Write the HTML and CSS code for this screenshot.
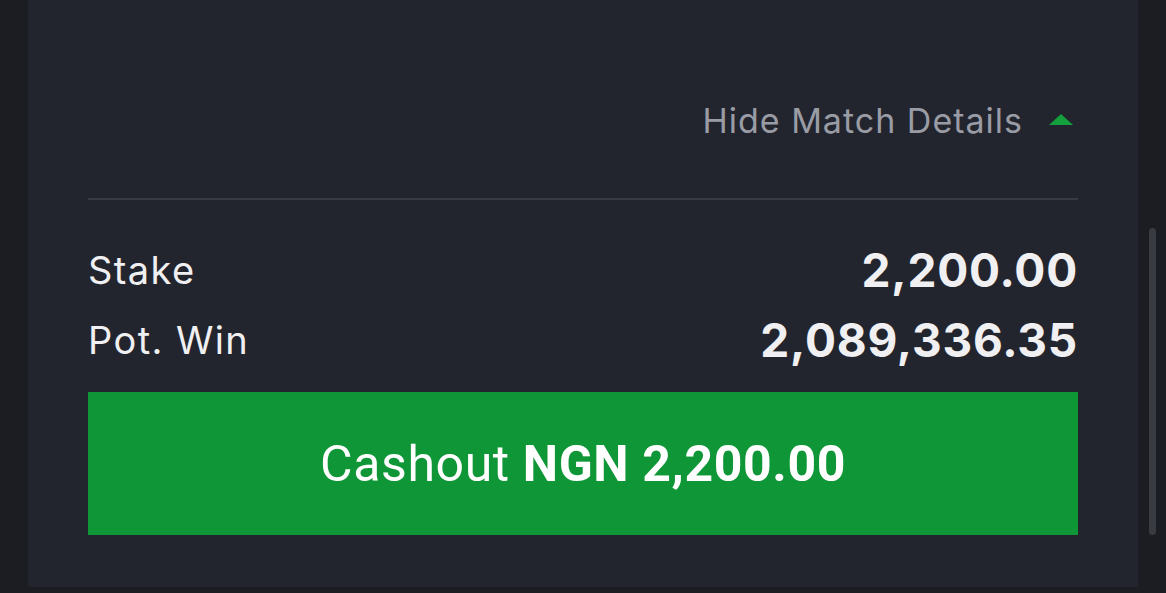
FILE: index.html
```html
<!DOCTYPE html>
<html>
<head>
<meta charset="utf-8">
<link rel="stylesheet" href="styles.css">
</head>
<body>
<div class="page">
  <div class="gutter"></div>
  <div class="panel">
    <div class="toggle">
      <span class="toggle-text">Hide Match Details</span>
      <svg class="caret" width="24" height="11" viewBox="0 0 24 11"><polygon points="12,0 24,11 0,11" fill="#14a03c"/></svg>
    </div>
    <div class="divider"></div>
    <div class="row"><span class="label">Stake</span><span class="value">2,200.00</span></div>
    <div class="row"><span class="label">Pot. Win</span><span class="value">2,089,336.35</span></div>
    <button class="cashout">Cashout <b>NGN 2,200.00</b></button>
  </div>
  <div class="rail"><div class="thumb"></div></div>
</div>
</body>
</html>
```
FILE: styles.css
```css
html, body {
  margin: 0;
  padding: 0;
  background: #1b1d23;
  height: 593px;
  overflow: hidden;
}
.page {
  display: flex;
  align-items: flex-start;
  height: 593px;
  font-family: Inter, "Noto Sans", sans-serif;
}
.gutter {
  width: 28px;
  flex: none;
}
.panel {
  width: 1110px;
  flex: none;
  box-sizing: border-box;
  background: #23252e;
  padding: 96px 60px 52px 60px;
  display: flex;
  flex-direction: column;
}
.toggle {
  height: 48px;
  display: flex;
  align-items: center;
  justify-content: flex-end;
  gap: 26px;
  padding-right: 5px;
  margin-bottom: 54px;
}
.toggle-text {
  color: #9a9ca5;
  font-size: 34px;
  font-weight: 400;
  letter-spacing: 1px;
}
.caret {
  display: block;
  margin-top: -2px;
}
.divider {
  height: 2px;
  background: #393b44;
  margin-bottom: 35px;
}
.row {
  height: 70px;
  display: flex;
  align-items: center;
  justify-content: space-between;
}
.label {
  color: #f0f0f3;
  font-size: 38px;
  font-weight: 400;
  letter-spacing: 1.4px;
}
.value {
  color: #f0f0f3;
  font-size: 46px;
  font-weight: 700;
  letter-spacing: 0.8px;
}
.cashout {
  margin-top: 17px;
  height: 143px;
  border: none;
  background: #0f9737;
  color: #ffffff;
  font-family: Roboto, "Noto Sans", sans-serif;
  font-size: 50px;
  font-weight: 400;
  letter-spacing: 0.6px;
  padding: 0;
}
.cashout b {
  font-weight: 700;
}
.rail {
  flex: 1;
  display: flex;
  justify-content: center;
  padding-top: 228px;
}
.thumb {
  width: 7px;
  height: 307px;
  border-radius: 4px;
  background: #393b43;
}
```
